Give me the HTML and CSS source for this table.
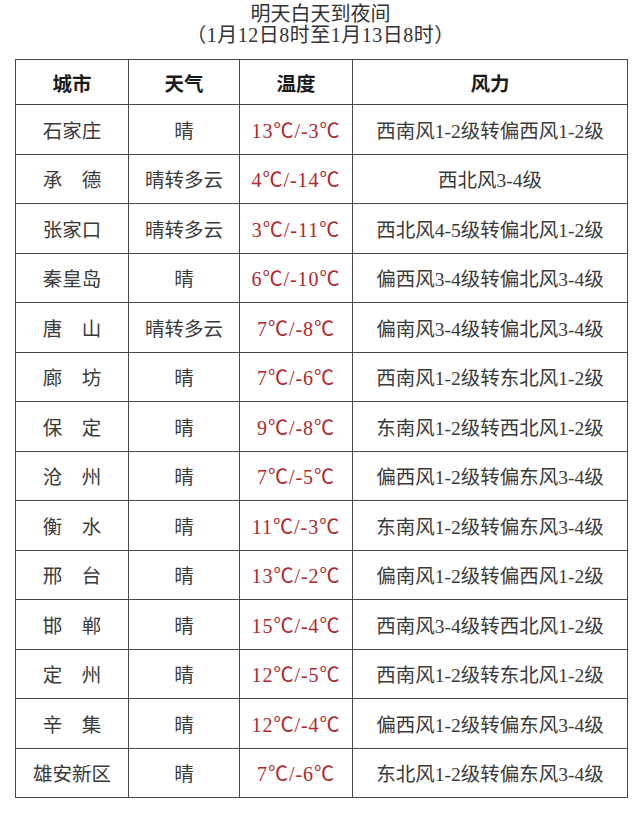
FILE: index.html
```html
<!DOCTYPE html>
<html lang="zh-CN">
<head>
<meta charset="utf-8">
<title>明天白天到夜间</title>
<link rel="stylesheet" href="styles.css">
</head>
<body>
<div class="page">
  <div class="title">
    <div class="title-line">明天白天到夜间</div>
    <div class="title-line sub">（1月12日8时至1月13日8时）</div>
  </div>
  <table class="forecast">
    <colgroup>
      <col class="c-city"><col class="c-wx"><col class="c-temp"><col class="c-wind">
    </colgroup>
    <thead>
      <tr><th>城市</th><th>天气</th><th>温度</th><th>风力</th></tr>
    </thead>
    <tbody>
      <tr><td>石家庄</td><td>晴</td><td class="temp">13<span class="deg">℃</span>/-3<span class="deg">℃</span></td><td>西南风1-2级转偏西风1-2级</td></tr>
      <tr><td>承　德</td><td>晴转多云</td><td class="temp">4<span class="deg">℃</span>/-14<span class="deg">℃</span></td><td>西北风3-4级</td></tr>
      <tr><td>张家口</td><td>晴转多云</td><td class="temp">3<span class="deg">℃</span>/-11<span class="deg">℃</span></td><td>西北风4-5级转偏北风1-2级</td></tr>
      <tr><td>秦皇岛</td><td>晴</td><td class="temp">6<span class="deg">℃</span>/-10<span class="deg">℃</span></td><td>偏西风3-4级转偏北风3-4级</td></tr>
      <tr><td>唐　山</td><td>晴转多云</td><td class="temp">7<span class="deg">℃</span>/-8<span class="deg">℃</span></td><td>偏南风3-4级转偏北风3-4级</td></tr>
      <tr><td>廊　坊</td><td>晴</td><td class="temp">7<span class="deg">℃</span>/-6<span class="deg">℃</span></td><td>西南风1-2级转东北风1-2级</td></tr>
      <tr><td>保　定</td><td>晴</td><td class="temp">9<span class="deg">℃</span>/-8<span class="deg">℃</span></td><td>东南风1-2级转西北风1-2级</td></tr>
      <tr><td>沧　州</td><td>晴</td><td class="temp">7<span class="deg">℃</span>/-5<span class="deg">℃</span></td><td>偏西风1-2级转偏东风3-4级</td></tr>
      <tr><td>衡　水</td><td>晴</td><td class="temp">11<span class="deg">℃</span>/-3<span class="deg">℃</span></td><td>东南风1-2级转偏东风3-4级</td></tr>
      <tr><td>邢　台</td><td>晴</td><td class="temp">13<span class="deg">℃</span>/-2<span class="deg">℃</span></td><td>偏南风1-2级转偏西风1-2级</td></tr>
      <tr><td>邯　郸</td><td>晴</td><td class="temp">15<span class="deg">℃</span>/-4<span class="deg">℃</span></td><td>西南风3-4级转西北风1-2级</td></tr>
      <tr><td>定　州</td><td>晴</td><td class="temp">12<span class="deg">℃</span>/-5<span class="deg">℃</span></td><td>西南风1-2级转东北风1-2级</td></tr>
      <tr><td>辛　集</td><td>晴</td><td class="temp">12<span class="deg">℃</span>/-4<span class="deg">℃</span></td><td>偏西风1-2级转偏东风3-4级</td></tr>
      <tr><td>雄安新区</td><td>晴</td><td class="temp">7<span class="deg">℃</span>/-6<span class="deg">℃</span></td><td>东北风1-2级转偏东风3-4级</td></tr>
    </tbody>
  </table>
</div>
</body>
</html>
```

FILE: styles.css
```css
html, body {
  margin: 0;
  padding: 0;
  background: #ffffff;
}

body {
  font-family: "Liberation Serif", "Noto Sans CJK SC", serif;
  color: #3a3a3a;
}

.page {
  width: 640px;
  padding: 4px 0 0 15px;
  box-sizing: border-box;
}

.title {
  width: 611px;
  text-align: center;
  font-size: 20px;
  line-height: 21px;
  color: #333333;
  height: 55px;
}

.title .sub {
  letter-spacing: 0.5px;
}

.forecast {
  border-collapse: collapse;
  table-layout: fixed;
  width: 612px;
}

.c-city { width: 113px; }
.c-wx { width: 111px; }
.c-temp { width: 113px; }
.c-wind { width: 275px; }

.forecast th,
.forecast td {
  border: 1px solid #4a4a4a;
  padding: 0;
  text-align: center;
  vertical-align: middle;
  font-size: 19.5px;
  white-space: nowrap;
  overflow: hidden;
}

.forecast th {
  height: 44px;
  font-weight: 600;
  color: #1a1a1a;
}

.forecast td {
  height: 48.5px;
  font-weight: 400;
  color: #3a3a3a;
}

.forecast td.temp {
  color: #b3262b;
  font-size: 20px;
  letter-spacing: 1px;
}

.deg {
  font-family: "Noto Sans CJK SC", sans-serif;
}
```
